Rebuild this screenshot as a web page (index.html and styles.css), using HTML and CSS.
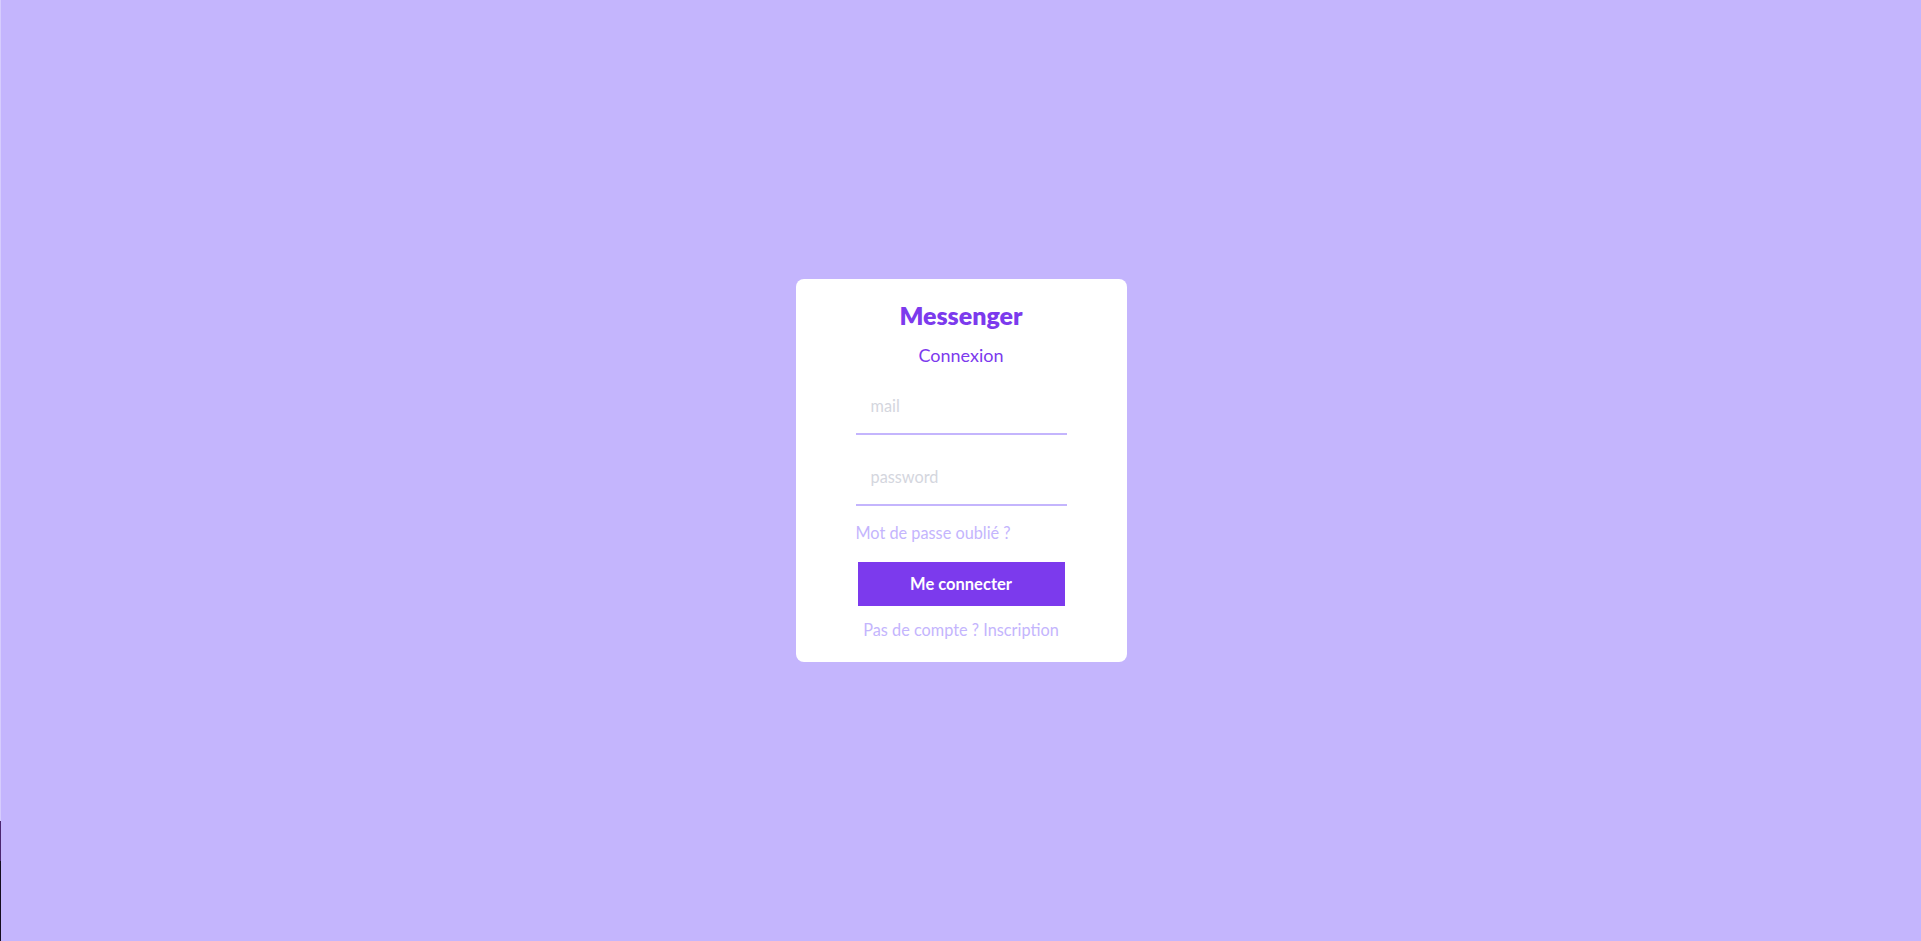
FILE: index.html
```html
<!DOCTYPE html>
<html lang="fr">
<head>
<meta charset="utf-8">
<title>Messenger - Connexion</title>
<link rel="stylesheet" href="styles.css">
</head>
<body>
<div class="page">
  <div class="edge">
    <span class="edge-light"></span>
    <span class="edge-dark"></span>
    <span class="edge-black"></span>
  </div>
  <main class="stage">
    <form class="card" onsubmit="return false;">
      <h1 class="title">Messenger</h1>
      <h2 class="subtitle">Connexion</h2>
      <input class="field" type="email" placeholder="mail">
      <input class="field field-second" type="password" placeholder="password">
      <a class="forgot" href="#">Mot de passe oublié ?</a>
      <button class="submit" type="submit">Me connecter</button>
      <a class="signup" href="#">Pas de compte ? Inscription</a>
    </form>
  </main>
</div>
</body>
</html>
```

FILE: styles.css
```css
* { box-sizing: border-box; }
html, body { margin: 0; padding: 0; height: 100%; }
body {
  font-family: "Lato", "Open Sans", "Liberation Sans", sans-serif;
  background: #c4b5fd;
}
.page {
  display: flex;
  height: 100vh;
}
.edge {
  width: 1px;
  display: flex;
  flex-direction: column;
}
.edge-light { height: 821px; background: #d6ccfd; }
.edge-dark { height: 40px; background: #4c2670; }
.edge-black { flex: 1; background: #140c1e; }
.stage {
  flex: 1;
  display: flex;
  align-items: center;
  justify-content: center;
}
.card {
  background: #ffffff;
  border-radius: 8px;
  width: 331px;
  padding: 20px 60px 21px;
  display: flex;
  flex-direction: column;
  align-items: center;
}
.title {
  margin: 0;
  font-size: 25px;
  font-weight: 800;
  line-height: 32px;
  color: #7c3aed;
}
.subtitle {
  margin: 12px 0 0;
  font-size: 18px;
  font-weight: 400;
  line-height: 24px;
  color: #7c3aed;
}
.field {
  width: 211px;
  height: 49px;
  margin-top: 19px;
  border: none;
  border-bottom: 2px solid #c4b5fd;
  outline: none;
  padding: 0 15px 8px;
  font-family: inherit;
  font-size: 16.3px;
  color: #4b5563;
  background: transparent;
}
.field-second { margin-top: 22px; }
.field::placeholder { color: #d4d6de; }
.forgot {
  align-self: flex-start;
  margin-top: 16px;
  font-size: 16.3px;
  line-height: 22px;
  color: #c4b5fd;
  text-decoration: none;
}
.submit {
  width: 207px;
  height: 44px;
  margin-top: 18px;
  border: none;
  background: #7c3aed;
  color: #ffffff;
  font-family: inherit;
  font-size: 16.5px;
  font-weight: 700;
  cursor: pointer;
}
.signup {
  margin-top: 13px;
  font-size: 16.3px;
  line-height: 22px;
  color: #c4b5fd;
  text-decoration: none;
}
```
